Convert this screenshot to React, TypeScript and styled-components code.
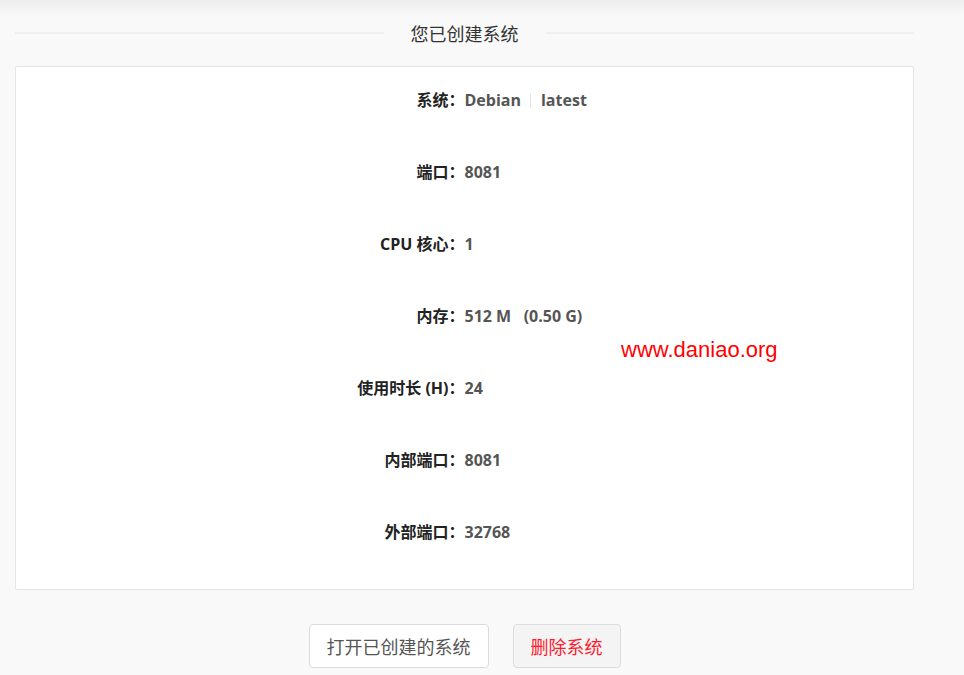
import styled, { createGlobalStyle } from "styled-components";

const GlobalStyle = createGlobalStyle`
  body {
    margin: 0;
    background: #f9f9f9;
    font-family: "Open Sans", "Noto Sans CJK SC", sans-serif;
  }
`;

const Shade = styled.div`
  height: 16px;
  background: linear-gradient(#ededed, #f9f9f9);
`;

const Wrapper = styled.div`
  width: 899px;
  margin-left: 15px;
  position: relative;
`;

const TitleRow = styled.div`
  height: 34px;
  display: flex;
  align-items: center;
  gap: 27px;

  &::before,
  &::after {
    content: "";
    flex: 1;
    height: 2px;
    background: #efefef;
  }
`;

const Title = styled.h3`
  margin: 0;
  font-size: 18px;
  font-weight: 400;
  color: #333;
  font-family: "Noto Sans CJK SC", sans-serif;
`;

const Card = styled.section`
  margin-top: 16px;
  background: #fff;
  border: 1px solid #e6e6e6;
  border-radius: 2px;
  padding: 18px 0 0;
`;

const Row = styled.div`
  display: grid;
  grid-template-columns: 1fr 1fr;
  height: 30px;
  line-height: 30px;
  margin-bottom: 42px;
  font-size: 16px;
  font-weight: 700;
`;

const Label = styled.span`
  text-align: right;
  color: #222;
`;

const Value = styled.span`
  color: #555;
  white-space: pre;
`;

const Sep = styled.span`
  display: inline-block;
  width: 1px;
  height: 14px;
  background: #e2e2e2;
  margin: 0 10px 0 9px;
  vertical-align: -2px;
`;

const Watermark = styled.span`
  position: absolute;
  left: 606px;
  top: 321px;
  color: #ff0000;
  font-size: 22px;
  font-family: "Liberation Sans", sans-serif;
`;

const Actions = styled.div`
  display: flex;
  justify-content: center;
  gap: 24px;
  margin-top: 34px;
`;

const Button = styled.button<{ danger?: boolean }>`
  height: 44px;
  padding: 0 17px;
  border: 1px solid #dcdcdc;
  border-radius: 4px;
  background: ${(props): string => (props.danger ? "#f4f4f4" : "#fff")};
  color: ${(props): string => (props.danger ? "#ff1a2e" : "#555")};
  font-size: 18px;
  font-family: "Noto Sans CJK SC", sans-serif;
  cursor: pointer;
`;

const rows: { label: string; value: string }[] = [
  { label: "端口：", value: "8081" },
  { label: "CPU 核心：", value: "1" },
  { label: "内存：", value: "512 M   (0.50 G)" },
  { label: "使用时长 (H)：", value: "24" },
  { label: "内部端口：", value: "8081" },
  { label: "外部端口：", value: "32768" },
];

const App = (): JSX.Element => {
  return (
    <>
      <GlobalStyle />
      <Shade />
      <Wrapper>
        <TitleRow>
          <Title>您已创建系统</Title>
        </TitleRow>
        <Card>
          <Row>
            <Label>系统：</Label>
            <Value>
              Debian
              <Sep />
              latest
            </Value>
          </Row>
          {rows.map((row) => (
            <Row key={row.label}>
              <Label>{row.label}</Label>
              <Value>{row.value}</Value>
            </Row>
          ))}
        </Card>
        <Watermark>www.daniao.org</Watermark>
        <Actions>
          <Button type="button">打开已创建的系统</Button>
          <Button type="button" danger>
            删除系统
          </Button>
        </Actions>
      </Wrapper>
    </>
  );
};

export default App;
